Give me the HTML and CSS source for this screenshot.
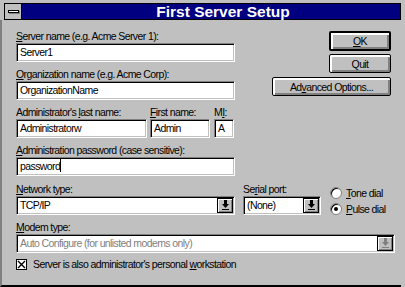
FILE: index.html
```html
<!DOCTYPE html>
<html>
<head>
<meta charset="utf-8">
<link rel="stylesheet" href="styles.css">
</head>
<body>
<div class="window">
  <div class="titlebar">
    <div class="sysmenu"><span class="bar"></span></div>
    <div class="title">First Server Setup</div>
  </div>
  <div class="client">
    <div class="top">
      <div class="fields">
        <div class="field">
          <label class="lbl"><u>S</u>erver name (e.g. Acme Server 1):</label>
          <div class="input">Server1</div>
        </div>
        <div class="field">
          <label class="lbl"><u>O</u>rganization name (e.g. Acme Corp):</label>
          <div class="input">OrganizationName</div>
        </div>
        <div class="field names">
          <div class="col last">
            <label class="lbl">Administrator's <u>l</u>ast name:</label>
            <div class="input">Administratorw</div>
          </div>
          <div class="col first">
            <label class="lbl"><u>F</u>irst name:</label>
            <div class="input">Admin</div>
          </div>
          <div class="col mi">
            <label class="lbl">M<u>I</u>:</label>
            <div class="input">A</div>
          </div>
        </div>
        <div class="field">
          <label class="lbl"><u>A</u>dministration password (case sensitive):</label>
          <div class="input">password<span class="caret"></span></div>
        </div>
      </div>
      <div class="buttons">
        <div class="btn default"><span><u>O</u>K</span></div>
        <div class="btn"><span>Quit</span></div>
        <div class="btn wide"><span>Ad<u>v</u>anced Options...</span></div>
      </div>
    </div>
    <div class="netrow">
      <div class="col net">
        <label class="lbl"><u>N</u>etwork type:</label>
        <div class="select">
          <div class="value">TCP/IP</div>
          <div class="drop"><svg width="9" height="11" viewBox="0 0 9 11"><path d="M3 0h3v4h2l-3.5 4L1 4h2z" fill="#000"/><rect x="1" y="9" width="7" height="1" fill="#000"/></svg></div>
        </div>
      </div>
      <div class="col serial">
        <label class="lbl">Se<u>r</u>ial port:</label>
        <div class="select">
          <div class="value">(None)</div>
          <div class="drop"><svg width="9" height="11" viewBox="0 0 9 11"><path d="M3 0h3v4h2l-3.5 4L1 4h2z" fill="#000"/><rect x="1" y="9" width="7" height="1" fill="#000"/></svg></div>
        </div>
      </div>
      <div class="radios">
        <div class="radio"><span class="circle"></span><span><u>T</u>one dial</span></div>
        <div class="radio"><span class="circle on"></span><span><u>P</u>ulse dial</span></div>
      </div>
    </div>
    <div class="field modem">
      <label class="lbl"><u>M</u>odem type:</label>
      <div class="select disabled">
        <div class="value">Auto Configure (for unlisted modems only)</div>
        <div class="drop"><svg width="9" height="11" viewBox="0 0 9 11"><path d="M3 0h3v4h2l-3.5 4L1 4h2z" fill="#808080"/><rect x="1" y="9" width="7" height="1" fill="#808080"/></svg></div>
      </div>
    </div>
    <div class="check">
      <span class="box"><svg width="9" height="9" viewBox="0 0 9 9"><path d="M1 1L8 8M8 1L1 8" stroke="#000" stroke-width="1.4"/></svg></span>
      <span>Server is also administrator's personal <u>w</u>orkstation</span>
    </div>
  </div>
</div>
</body>
</html>
```
FILE: styles.css
```css
* { box-sizing: border-box; }
html, body { margin: 0; padding: 0; }
body {
  background: #c0c0c0;
  font-family: "Liberation Sans", Arial, sans-serif;
  font-size: 10.5px;
  letter-spacing: -0.6px;
  color: #000;
  width: 405px;
  height: 287px;
  overflow: hidden;
}
.window {
  width: 405px;
  height: 287px;
  padding: 3px 4px 0 0;
  display: flex;
  flex-direction: column;
}
.titlebar {
  margin-left: 4px;
  height: 17px;
  border: 1px solid #000;
  background: #000080;
  display: flex;
}
.sysmenu {
  width: 17px;
  background: #c0c0c0;
  border-right: 1px solid #000;
  display: flex;
  align-items: center;
  justify-content: center;
}
.sysmenu .bar {
  width: 11px;
  height: 3px;
  background: #fff;
  border: 1px solid #000;
  box-shadow: 1px 1px 0 #808080;
}
.title {
  flex: 1;
  padding-left: 24px;
  text-align: center;
  color: #fff;
  font-weight: bold;
  font-size: 15.5px;
  letter-spacing: 0;
  line-height: 15px;
}
.client {
  flex: 1;
  border-left: 2px solid #808080;
  border-bottom: 2px solid #000;
  padding: 10px 0 0 14px;
  display: flex;
  flex-direction: column;
}
.top { display: flex; }
.fields { width: 219px; display: flex; flex-direction: column; }
.field { display: flex; flex-direction: column; margin-bottom: 6px; }
.lbl { display: block; height: 13px; line-height: 13px; white-space: nowrap; }
.input {
  height: 19px;
  background: #fff;
  border-top: 1px solid #808080;
  border-left: 1px solid #808080;
  border-right: 1px solid #fff;
  border-bottom: 1px solid #fff;
  box-shadow: inset 1px 1px 0 #000, inset -1px -1px 0 #c0c0c0;
  padding: 0 3px;
  line-height: 17px;
  white-space: nowrap;
  overflow: hidden;
}
.caret { display: inline-block; width: 1px; height: 13px; background: #000; vertical-align: -2px; }
.names { flex-direction: row; }
.names .col { display: flex; flex-direction: column; }
.names .last { width: 131px; margin-right: 3px; }
.names .first { width: 60px; margin-right: 4px; }
.names .mi { width: 20px; }
.buttons {
  margin-left: 37px;
  padding-top: 1px;
  display: flex;
  flex-direction: column;
  align-items: flex-end;
  width: 119px;
}
.btn {
  width: 62px;
  height: 19px;
  border: 1px solid #000;
  border-radius: 2px;
  background: #c0c0c0;
  box-shadow: inset 1px 1px 0 #fff, inset 2px 2px 0 #fff, inset -1px -1px 0 #808080, inset -2px -2px 0 #808080;
  display: flex;
  align-items: center;
  justify-content: center;
  margin-bottom: 4px;
}
.btn.default {
  height: 20px;
  border-width: 2px;
  margin-bottom: 3px;
}
.btn.wide { width: 119px; }
.netrow { display: flex; margin-top: 1px; }
.netrow .col { display: flex; flex-direction: column; }
.net { width: 219px; margin-right: 8px; }
.serial { width: 78px; }
.select {
  height: 19px;
  display: flex;
  background: #fff;
  border-top: 1px solid #808080;
  border-left: 1px solid #808080;
  border-right: 1px solid #fff;
  border-bottom: 1px solid #fff;
  box-shadow: inset 1px 1px 0 #000, inset -1px -1px 0 #c0c0c0;
}
.select .value {
  flex: 1;
  padding: 0 3px;
  line-height: 17px;
  white-space: nowrap;
  overflow: hidden;
}
.drop {
  width: 16px;
  margin: 1px 1px 1px 0;
  border: 1px solid #000;
  background: #c0c0c0;
  box-shadow: inset 1px 1px 0 #fff, inset -1px -1px 0 #808080;
  display: flex;
  align-items: center;
  justify-content: center;
}
.select.disabled .value { color: #808080; }
.radios {
  margin-left: 9px;
  padding-top: 3px;
  display: flex;
  flex-direction: column;
  gap: 3px;
}
.radio { display: flex; align-items: center; gap: 4px; height: 13px; white-space: nowrap; }
.circle {
  width: 12px;
  height: 12px;
  border-radius: 50%;
  background: #fff;
  border: 1px solid #808080;
  box-shadow: inset 1px 1px 0 #000;
  display: flex;
  align-items: center;
  justify-content: center;
}
.circle.on::after {
  content: "";
  width: 4px;
  height: 4px;
  border-radius: 50%;
  background: #000;
}
.modem { margin-top: 6px; margin-right: 6px; margin-bottom: 5px; }
.check { display: flex; align-items: center; gap: 6px; }
.box {
  width: 11px;
  height: 11px;
  background: #fff;
  border: 1px solid #000;
  display: flex;
  align-items: center;
  justify-content: center;
}
```
